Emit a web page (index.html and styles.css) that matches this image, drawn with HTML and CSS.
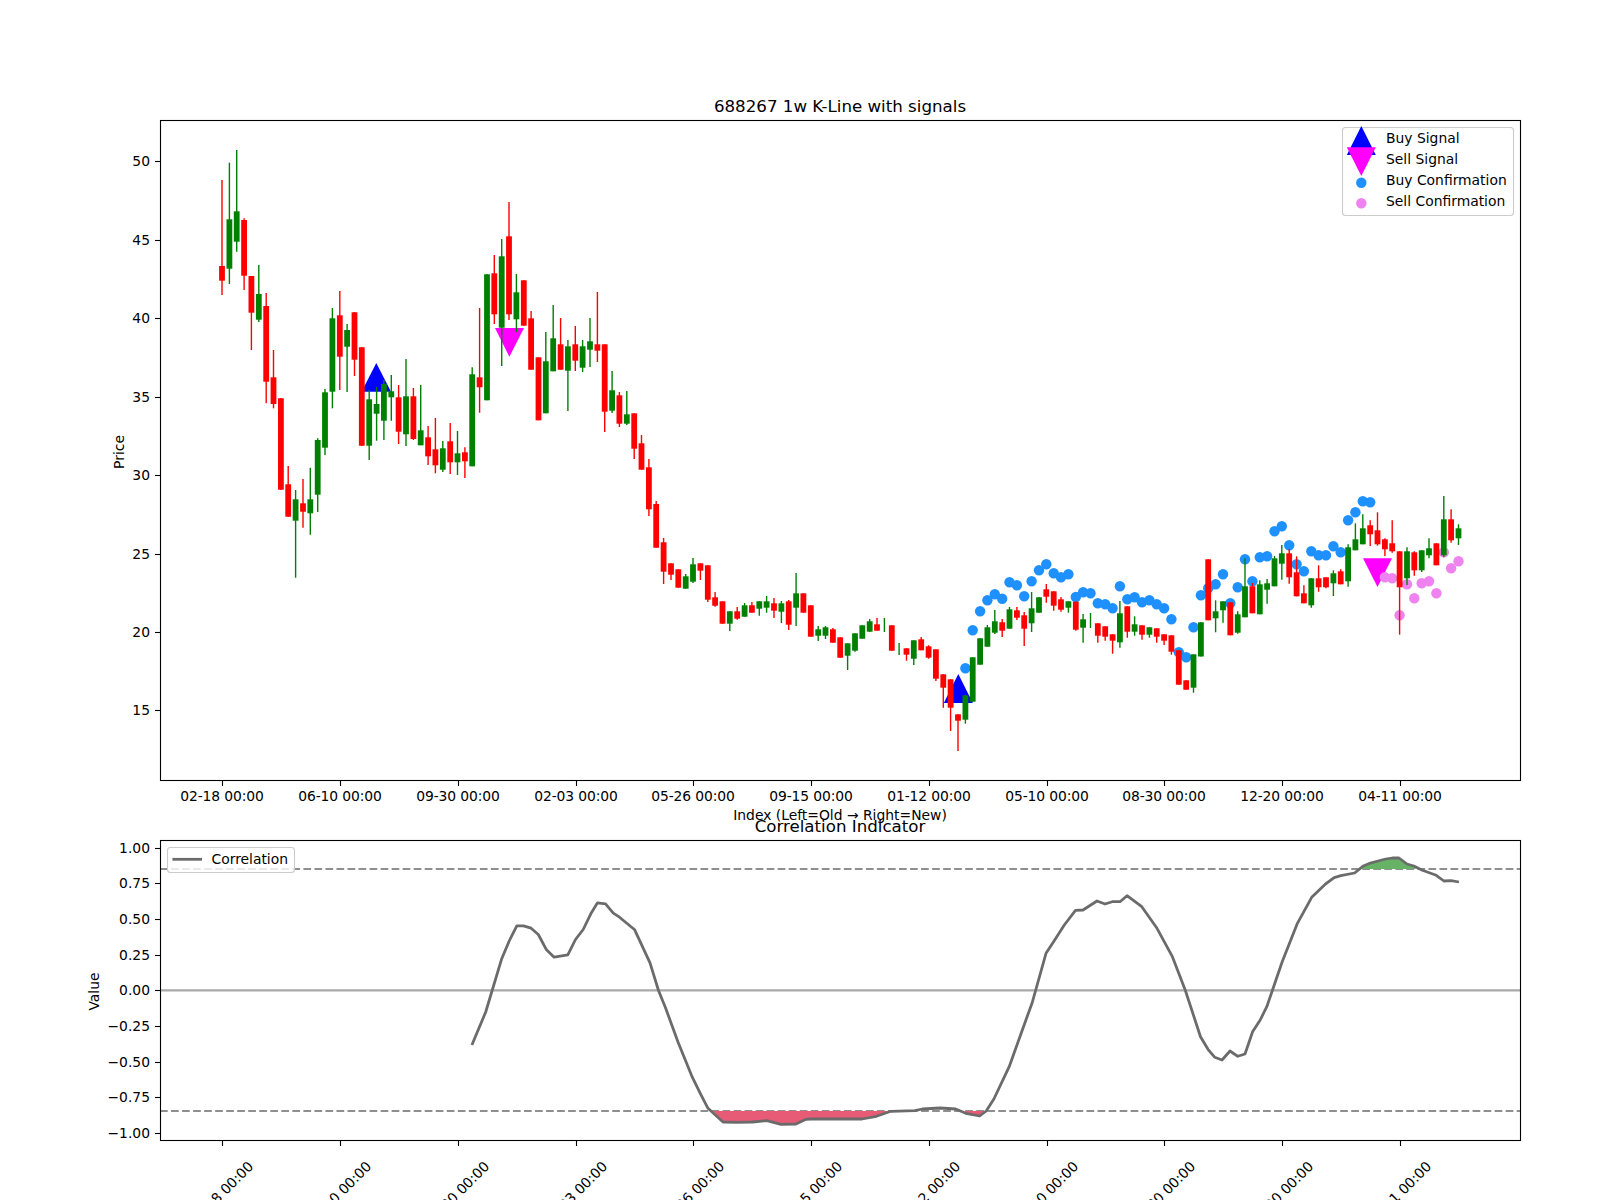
FILE: index.html
```html
<!DOCTYPE html>
<html lang="en">
<head>
<meta charset="utf-8">
<title>688267 1w K-Line with signals</title>
<link rel="stylesheet" href="styles.css">
</head>
<body>
<svg class="figure" width="1600" height="1200" viewBox="0 0 1600 1200" xmlns="http://www.w3.org/2000/svg">
  <!-- Price panel -->
  <text class="title" x="840" y="112">688267 1w K-Line with signals</text>
  <g id="markers">
    <polygon class="buy" points="376.3,363 391,391.7 361.6,391.7"/>
    <polygon class="buy" points="958.3,674 972.8,703 943.8,703"/>
    <polygon class="sell" points="495,328 524,328 509.4,356.8"/>
    <polygon class="sell" points="1363,558.3 1392,558.3 1377.5,587"/>
  </g>
  <g id="dots"></g>
  <g id="candles"></g>
  <rect class="spine" x="160.5" y="120.5" width="1360" height="660"/>
  <g id="price-y"></g>
  <g id="price-x"></g>
  <text class="label" transform="translate(124 452) rotate(-90)">Price</text>
  <text class="label" x="840" y="819.5">Index (Left=Old → Right=New)</text>

  <g class="legend">
    <rect class="legend-box" x="1342.5" y="127.5" width="171" height="88" rx="3"/>
    <polygon class="buy" points="1361.3,126 1375.8,155 1346.8,155"/>
    <polygon class="sell" points="1346.8,147.3 1375.8,147.3 1361.3,176"/>
    <circle class="dot-buy" cx="1361.3" cy="182.7" r="5.2"/>
    <circle class="dot-sell" cx="1361.3" cy="203.3" r="5.2"/>
    <text class="tick" x="1386" y="142.5">Buy Signal</text>
    <text class="tick" x="1386" y="163.5">Sell Signal</text>
    <text class="tick" x="1386" y="184.5">Buy Confirmation</text>
    <text class="tick" x="1386" y="205.5">Sell Confirmation</text>
  </g>

  <!-- Correlation panel -->
  <text class="title" x="840" y="832">Correlation Indicator</text>
  <line class="zero" x1="160" y1="990.4" x2="1520" y2="990.4"/>
  <line class="thresh" x1="160" y1="869" x2="1520" y2="869"/>
  <line class="thresh" x1="160" y1="1111" x2="1520" y2="1111"/>
  <path class="fill-neg" d="M713,1111 L723,1122 737,1122.3 752.6,1122 766.8,1120.7 781,1124.4 796,1124 806,1119.3 811,1119 862,1119 876.5,1116.3 885,1113 890,1111 Z"/>
  <path class="fill-neg" d="M965,1111 L966,1113.3 979.6,1116 983.5,1111 Z"/>
  <path class="fill-pos" d="M1360,869 L1362.8,866.3 1370.4,863 1385.7,859 1392.3,858 1399,858 1407,864 1413.8,866 1416,869 Z"/>
  <polyline class="corr" points="471.9,1045 485.7,1012 501.5,959.3 509.2,941 516.8,925.8 523.5,925.8 531.1,928.2 538.3,934.5 546.5,949.8 554.1,957.2 567.8,954.8 575.5,939.5 583.2,929.5 590.8,913.8 597.5,902.8 605.5,903.8 613.3,913.2 619.5,917.2 634.7,929.8 650,962.8 658.5,990.5 665.3,1007.2 678.1,1042.2 692.3,1077.2 700.5,1093.8 708,1108.3 723,1122 737.2,1122.3 752.6,1122 766.8,1120.7 781,1124.4 796,1124 806,1119.3 811,1119 862,1119 876.5,1116.3 890.8,1111.3 914.8,1110.7 922.4,1109 940.3,1108 955.6,1109 965.8,1113.3 979.6,1116 986.2,1111 993.9,1099 1009.2,1066.7 1023.5,1026.7 1032,1003.3 1046,953.3 1053.6,941.7 1064.3,925 1075.5,910.3 1083,910 1097,901 1105,904 1112.2,901.7 1120,901.7 1127,895.7 1141.8,906.7 1157,928.3 1172.4,956.7 1185.2,990 1200.5,1036.7 1208,1049.3 1214.8,1057.3 1222,1060 1230,1051 1237.8,1056.3 1245,1054 1252.6,1031.7 1260.2,1020 1266.8,1006.7 1282.2,961.7 1297.4,923.3 1311.7,897.3 1325.5,884 1334.2,877.7 1340.8,875.7 1354.6,873 1362.8,866.3 1370.4,863 1385.7,859 1392.3,858 1399,858 1407,864 1413.8,866 1422.4,870.3 1436.2,875.3 1443.9,881 1451,880.7 1459,882"/>
  <rect class="spine" x="160.5" y="840.5" width="1360" height="300"/>
  <g id="corr-y"></g>
  <g id="corr-x"></g>
  <text class="label" transform="translate(99 991.5) rotate(-90)">Value</text>

  <g class="legend">
    <rect class="legend-box" x="167.5" y="847.5" width="127" height="25" rx="3"/>
    <line class="corr" x1="172.4" y1="859.3" x2="202" y2="859.3"/>
    <text class="tick" x="211.5" y="864">Correlation</text>
  </g>
</svg>
<script src="chart.js"></script>
</body>
</html>
```
FILE: styles.css
```css
html, body {
  margin: 0;
  padding: 0;
  background: #fff;
  overflow: hidden;
}
.figure {
  display: block;
  font-family: "DejaVu Sans", sans-serif;
}
.title {
  font-size: 16.67px;
  text-anchor: middle;
  fill: #000;
}
.label {
  font-size: 13.89px;
  text-anchor: middle;
  fill: #000;
}
.tick {
  font-size: 13.89px;
  fill: #000;
}
.tick-end {
  font-size: 13.89px;
  text-anchor: end;
  fill: #000;
}
.tick-mid {
  font-size: 13.89px;
  letter-spacing: -0.1px;
  text-anchor: middle;
  fill: #000;
}
.spine {
  fill: none;
  stroke: #000;
  stroke-width: 1.1;
}
.mark {
  stroke: #000;
  stroke-width: 1.1;
}
.buy { fill: #0000ff; }
.sell { fill: #ff00ff; }
.dot-buy { fill: #1e90ff; }
.dot-sell { fill: #ee82ee; }
.red-wick { stroke: #ff0000; stroke-width: 1.4; }
.green-wick { stroke: #008000; stroke-width: 1.4; }
.red-body { fill: #ff0000; }
.green-body { fill: #008000; }
.legend-box {
  fill: rgba(255, 255, 255, 0.8);
  stroke: #cccccc;
  stroke-width: 1.1;
}
.zero {
  stroke: #a9a9a9;
  stroke-width: 2.08;
}
.thresh {
  stroke: #8f8f8f;
  stroke-width: 2.08;
  stroke-dasharray: 7.7 3.33;
}
.corr {
  fill: none;
  stroke: #6b6b6b;
  stroke-width: 2.78;
  stroke-linejoin: round;
}
.fill-neg { fill: #e75b77; }
.fill-pos { fill: #66b366; }
```
FILE: chart.js
```js
var NS = 'http://www.w3.org/2000/svg';
function el(parent, tag, cls, attrs, text) {
  var e = document.createElementNS(NS, tag);
  if (cls) e.setAttribute('class', cls);
  for (var k in attrs) e.setAttribute(k, attrs[k]);
  if (text !== undefined) e.textContent = text;
  document.getElementById(parent).appendChild(e);
  return e;
}
function cx(i) { return 222 + 7.36 * i; }

// colour, wick top, wick bottom, body top, body bottom (figure pixels)
var candles = [
['r',180,295,266,280.7],['g',162.7,284,219.3,268.7],['g',150,251.7,211.3,241.7],['r',218.3,290,220,275.7],
['r',276,350,276,312.7],['g',265,322,294,319.7],['r',293,403.3,306,381.7],['r',350,408.3,377.3,404],
['r',398,490,398.3,489.7],['r',466,517,484.3,516.7],['g',490,577.7,499.3,520.7],['r',479,527.7,503.3,511.7],
['g',467.7,534.7,499.3,513.3],['g',438.3,512,440,494.7],['g',389,455,392.3,447.7],['g',308,408.3,318.3,391.7],
['r',291,390,315.3,356.7],['g',324,392,330,346.7],['r',312,376,312.3,359.7],['r',347,446,347.3,445.7],
['g',390,460,399.3,445.7],['g',387,440.7,404,413.7],['g',380,440,384,420.7],['g',375,420.7,391.3,397.3],
['r',385,444,397.3,431.7],['g',359,446,396.3,434.3],['r',388,440,396.3,439],['g',385,445.3,430.3,445.3],
['r',426,465,437.3,456.3],['r',418,473.3,449.3,465.3],['g',441,472,448.3,469.7],['r',423,474,441.3,462.3],
['g',431,475,453.3,462.3],['r',447.3,478,452.3,461.3],['g',367.3,466.3,374.3,466.3],['r',308,412.7,377.3,387.3],
['g',274,400.3,274.3,400.3],['r',255,324,273.3,314.3],['g',239,366,256.3,327.7],['r',202,320,236.3,314.3],
['g',274,332,292.3,319.3],['r',280.3,325.7,280.3,325.7],['r',311,369.7,318.3,369.7],['r',357.3,420.3,357.3,420.3],
['g',332,413.3,361.3,413.3],['g',305,371.3,338.3,371.3],['r',318,369.7,344.3,369.7],['g',340,411,346.3,370.7],
['r',326,371,344.3,360.7],['g',340,372,346.3,367.7],['g',318,367,341.3,349.7],['r',292,362,344.3,350.7],
['r',344.3,432,344.3,411.7],['g',371,413,390.3,410.7],['r',392,427,395.3,423.7],['g',391,425,414.3,423.7],
['r',413.3,459,413.3,448.7],['r',435,469.7,443.3,469.7],['r',459,516,467.3,509.3],['r',501,547.7,504,547.7],
['r',538,584,542.3,571.7],['r',563.3,580,563.3,574.7],['r',569.3,587.7,569.3,587.7],['g',574,588.7,576.3,588.7],
['g',558,583,564.3,581.7],['r',563.3,580,563.3,570.7],['r',565.3,602,565.3,599.7],['r',592,606.7,597.3,605.7],
['r',601.3,623.7,601.3,623.7],['g',611.3,631,611.3,623.7],['r',607,619.7,611.3,618.7],['g',603,616.7,605.3,616.7],
['r',602,612.7,605.3,612.7],['g',601.3,615.7,601.3,608.7],['g',596,612.7,601.3,607.7],['r',598,618,603.3,610.7],
['g',601,623,603.3,611.7],['r',600,630,601.3,624.7],['g',573,626,593.3,607.7],['r',593.3,612.7,593.3,612.7],
['r',605.3,636.7,605.3,636.7],['g',626,641,629.3,635.7],['g',626,639,627.3,635.7],['r',628,642.7,629.3,642.7],
['r',637.3,657.7,637.3,657.7],['g',643.3,670,643.3,655.7],['g',633.3,651.7,633.3,650.7],['g',625.3,638.7,625.3,638.7],
['g',619,631.7,621.3,631.7],['r',618,630.7,624.3,630.7],['g',618,632,625,625],['r',625.3,650.7,625.3,650.7],
['g',643,655,649,649],['r',648.3,660.7,648.3,654.7],['g',640.3,665,640.3,658.7],['r',637,650.3,639.3,650.3],
['r',645.3,658.7,646.3,657.7],['r',649.3,681,649.3,678.7],['r',674.3,707.7,674.3,687.7],['r',679.3,731,679.3,707.7],
['r',714.3,751,714.3,720.7],['g',695,723.7,695.3,719.7],['g',657.3,701.7,657.3,701.7],['g',638.3,664.7,638.3,664.7],
['g',625,646.7,627.3,646.7],['g',610,634,621.3,632.7],['r',619,637,622.3,630.7],['g',607,628.7,609.3,628.7],
['r',607,620,610.3,617.7],['r',612,646,615.3,628.7],['g',592,632,608.3,623.3],['g',597,613,597.3,612.7],
['r',584,602.7,589.3,596.7],['r',591.3,610.7,591.3,605.7],['r',597,611.7,599.3,609.7],['g',601.3,612.7,601.3,607.7],
['r',601.7,630.7,601.7,629.7],['g',614,642.7,619.3,627.7],['g',613,628,620,620],['r',623.3,642.7,623.3,635.7],
['r',626.3,640.7,626.3,636.7],['r',634.3,653.7,634.3,640.7],['g',601,647.7,613.3,642.3],['r',606.3,637.7,606.3,631.7],
['g',616.3,635.7,624.3,631.7],['r',625.3,639.7,625.3,634.7],['g',627.3,637.7,627.3,634.7],['r',628.3,642.7,628.3,636.7],
['r',634.3,645,634.3,640.7],['r',635.3,654.7,635.3,651.7],['r',650.3,684.7,650.3,684.7],['r',680.3,689.7,680.3,689.7],
['g',654.3,692.7,654.3,687.7],['g',622.3,656.5,622.3,656.5],['r',559.3,620.3,559.3,620.3],['g',600.3,632.3,611.3,618.3],
['g',601.3,622.7,601.3,610.3],['r',602.3,635.3,602.3,635.3],['g',611.3,633.7,614.3,632.7],['g',558.3,617.3,586.3,617.3],
['r',583,613.3,586.3,613.3],['g',580.3,614.3,584.3,614.3],['g',579,603.7,583.3,589.7],['g',556,586.3,558.3,586.3],
['g',545,579.7,553.3,563.7],['r',549.3,583.7,553.3,577.3],['r',556.3,596.3,572.3,596.3],['r',585.3,603.3,593.3,603.3],
['g',578.3,607.7,578.3,605.3],['r',565.3,591.7,578.3,587.3],['r',577.3,588.3,577.3,587.3],['g',570.3,596,573.3,583.3],
['r',569.3,584.3,571.3,584.3],['g',544.3,586.7,547.3,581.3],['g',523.3,550.3,539.3,550.3],['g',514.3,544.3,528.3,544.3],
['r',520.3,546,525.3,534.3],['r',512.3,545.7,530.3,544.3],['r',538.3,556,539.3,549.3],['r',520.3,552.7,543.3,551.3],
['r',551.3,634.7,551.3,587.3],['g',547.3,585,551.3,578.3],['r',551.3,575.7,552.3,570.3],['g',550.3,572,550.3,570.3],
['g',538.3,558.3,548.3,555.3],['r',543.3,565.3,543.3,565.3],['g',496,557.3,519.3,555.3],['r',509.3,542.7,519.3,540.3],
['g',524.3,545,528.3,538.3]
];

// dots: [candle index, y]
var buyDots = [[101,668.3],[102,630.3],[103,611.3],[104,600.3],[105,594.3],[106,598.7],[107,582.3],[108,585.3],[109,596.3],[110,581.3],[111,570.3],[112,564.3],[113,573.3],[114,577.3],[115,574.3],[116,597],[117,592.3],[118,593.3],[119,603.3],[120,604.3],[121,608.3],[122,586.3],[123,599.3],[124,597.3],[125,602.3],[126,600.3],[127,604.3],[128,608.3],[129,619.3],[130,652.3],[131,657.3],[132,627.3],[133,595.3],[134,588.3],[135,584.3],[136,574.3],[137,603.3],[138,587.3],[139,559.3],[140,581.3],[141,557.3],[142,556.3],[143,531.3],[144,526.3],[145,545.3],[146,564.3],[147,571.3],[148,551.3],[149,555.3],[150,555.3],[151,546.3],[152,552.3],[153,520.3],[154,512.3],[155,501.3],[156,502.3]];
var sellDots = [[158,577.3],[159,578.3],[160,615.3],[161,584.3],[162,598.3],[163,583.3],[164,581.3],[165,593.3],[166,552.3],[167,568.3],[168,561.3]];

buyDots.forEach(function (d) { el('dots', 'circle', 'dot-buy', { cx: cx(d[0]).toFixed(1), cy: d[1], r: 5.2 }); });
sellDots.forEach(function (d) { el('dots', 'circle', 'dot-sell', { cx: cx(d[0]).toFixed(1), cy: d[1], r: 5.2 }); });

candles.forEach(function (c, i) {
  var name = c[0] === 'r' ? 'red' : 'green';
  var x = cx(i);
  el('candles', 'line', name + '-wick', { x1: x.toFixed(1), x2: x.toFixed(1), y1: c[1], y2: c[2] });
  if (c[4] > c[3]) {
    el('candles', 'rect', name + '-body', { x: (x - 2.9).toFixed(1), y: c[3], width: 5.8, height: (c[4] - c[3]).toFixed(1) });
  }
});

// Axes
var labels = ['02-18 00:00','06-10 00:00','09-30 00:00','02-03 00:00','05-26 00:00','09-15 00:00','01-12 00:00','05-10 00:00','08-30 00:00','12-20 00:00','04-11 00:00'];
labels.forEach(function (t, k) {
  var x = Math.round(222.3 + 117.76 * k) + 0.5;
  el('price-x', 'line', 'mark', { x1: x, x2: x, y1: 780, y2: 786 });
  el('price-x', 'text', 'tick-mid', { x: x - 0.5, y: 801 }, t);
  el('corr-x', 'line', 'mark', { x1: x, x2: x, y1: 1140, y2: 1146 });
  el('corr-x', 'text', 'tick-mid', { transform: 'translate(' + (x + 2) + ' 1197) rotate(-45)' }, t);
});
[50, 45, 40, 35, 30, 25, 20, 15].forEach(function (v) {
  var y = Math.round(161.3 + (50 - v) * 15.69) + 0.5;
  el('price-y', 'line', 'mark', { x1: 155, x2: 160, y1: y, y2: y });
  el('price-y', 'text', 'tick-end', { x: 150, y: y + 4 }, String(v));
});
[1, 0.75, 0.5, 0.25, 0, -0.25, -0.5, -0.75, -1].forEach(function (v) {
  var y = Math.round(990.4 - 142.7 * v) + 0.5;
  el('corr-y', 'line', 'mark', { x1: 155, x2: 160, y1: y, y2: y });
  el('corr-y', 'text', 'tick-end', { x: 150, y: y + 4 }, (v < 0 ? '\u2212' : '') + Math.abs(v).toFixed(2));
});
```
